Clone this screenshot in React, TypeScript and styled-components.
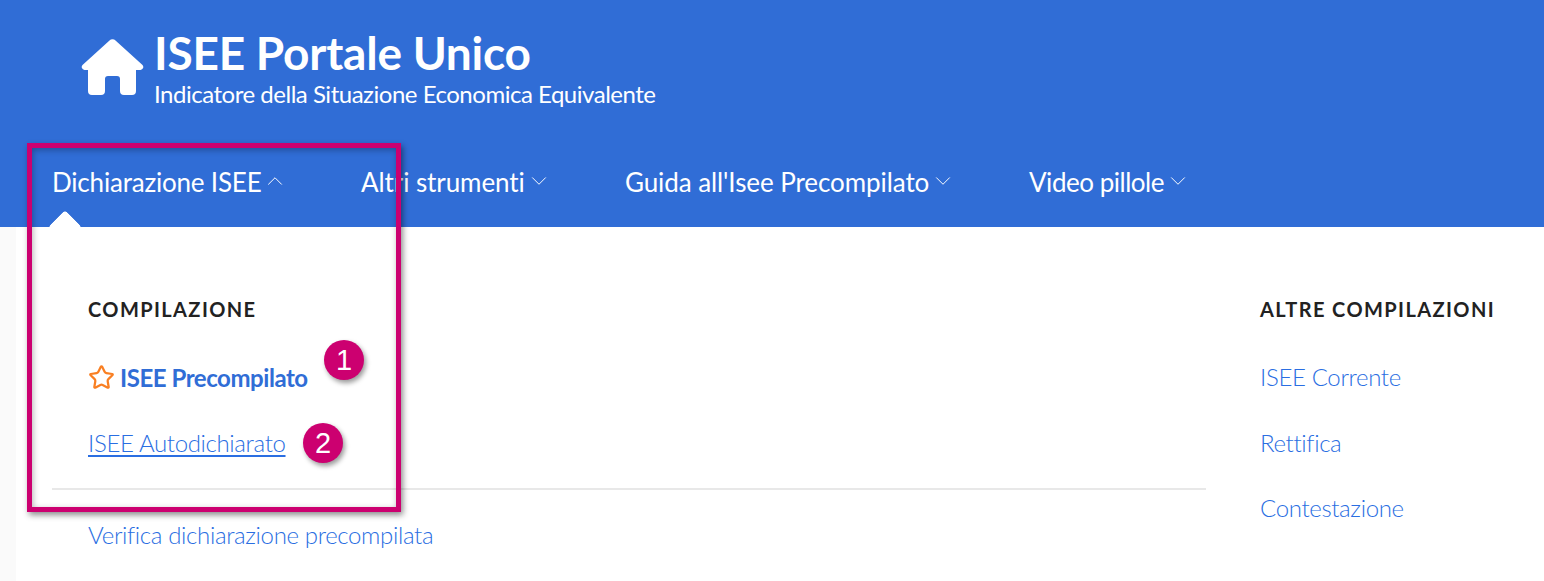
import React from "react";
import styled, { createGlobalStyle } from "styled-components";
import { Star, ChevronDown, ChevronUp } from "lucide-react";

const Global = createGlobalStyle`
  html, body { margin: 0; padding: 0; background: #fafafa; }
  body { font-family: Lato, "Noto Sans", "Liberation Sans", sans-serif; overflow: hidden; height: 581px; }
  * { box-sizing: border-box; }
`;

const Page = styled.div`
  position: relative;
  width: 1544px;
  height: 581px;
  overflow: hidden;
`;

const Header = styled.header`
  height: 227px;
  background: #306dd6;
  color: #fff;
  display: flex;
  flex-direction: column;
`;

const Brand = styled.div`
  display: flex;
  align-items: flex-start;
  gap: 10px;
  padding: 25px 0 0 81px;
  height: 143px;
`;

const HomeIcon = styled.svg`
  width: 63px;
  height: 56px;
  margin-top: 14px;
  flex: none;
`;

const BrandText = styled.div`
  display: flex;
  flex-direction: column;
`;

const Title = styled.h1`
  margin: 0;
  font-size: 46px;
  line-height: 56px;
  font-weight: 700;
  letter-spacing: -0.22px;
`;

const Subtitle = styled.div`
  font-size: 24px;
  line-height: 28px;
  margin-top: -1px;
  letter-spacing: -0.48px;
`;

const Nav = styled.nav`
  display: flex;
  padding: 22px 0 0 52px;
  position: relative;
`;

const NavItem = styled.a<{ $w: number; $track: number }>`
  display: flex;
  align-items: center;
  gap: 1px;
  width: ${(p) => p.$w}px;
  height: 34px;
  font-size: 26px;
  letter-spacing: ${(p) => p.$track}px;
  color: #fff;
`;

const Chevron = styled.span`
  display: flex;
  margin-top: -3px;
`;

const Caret = styled.span`
  position: absolute;
  left: 53px;
  top: 72px;
  width: 24px;
  height: 24px;
  background: #fff;
  border-radius: 4px;
  transform: rotate(45deg);
  clip-path: polygon(0 0, 100% 0, 0 100%);
`;

const Menu = styled.main`
  margin-left: 16px;
  height: 354px;
  background: #fff;
  display: grid;
  grid-template-columns: 1190px 1fr;
  padding: 0 0 0 36px;
`;

const LeftColumn = styled.section`
  display: flex;
  flex-direction: column;
  padding-top: 68px;
`;

const RightColumn = styled.section`
  display: flex;
  flex-direction: column;
  padding: 68px 0 0 18px;
`;

const LinkGroup = styled.div`
  padding-left: 36px;
  display: flex;
  flex-direction: column;
`;

const Heading = styled.h3`
  margin: 0 0 21px;
  font-size: 20px;
  line-height: 28px;
  font-weight: 700;
  letter-spacing: 1.4px;
  color: #222;
  white-space: nowrap;
`;

const MenuLink = styled.a<{ $bold?: boolean; $under?: boolean }>`
  display: flex;
  align-items: center;
  gap: 5px;
  height: 65.5px;
  padding-top: ${(p) => (p.$bold ? "2px" : "0")};
  font-size: 24px;
  letter-spacing: ${(p) => (p.$bold ? "-0.45px" : "-0.35px")};
  color: ${(p) => (p.$bold ? "#306dd6" : "#2a6ee2")};
  font-weight: ${(p) => (p.$bold ? 700 : 300)};
  span { text-decoration: ${(p) => (p.$under ? "underline" : "none")}; text-underline-offset: 3px; }
`;

const OrangeStar = styled(Star)`
  color: #f97f22;
  flex: none;
`;

const Divider = styled.hr`
  margin: 13px 0 12px;
  border: none;
  height: 2px;
  background: #e8e8e8;
  width: 1154px;
`;

const Highlight = styled.div`
  position: absolute;
  left: 27px;
  top: 143px;
  width: 374px;
  height: 369px;
  border: 5px solid #cc0070;
  box-shadow: 2px 3px 6px rgba(0, 0, 0, 0.45), inset 1px 2px 6px rgba(0, 0, 0, 0.3);
  pointer-events: none;
`;

const Badge = styled.div<{ $x: number; $y: number }>`
  position: absolute;
  left: ${(p) => p.$x}px;
  top: ${(p) => p.$y}px;
  width: 40px;
  height: 40px;
  border-radius: 50%;
  background: #cc0070;
  color: #fff;
  font-family: "Liberation Sans", Arial, sans-serif;
  font-size: 29px;
  display: flex;
  align-items: center;
  justify-content: center;
  box-shadow: 2px 3px 5px rgba(0, 0, 0, 0.4);
`;

const nav = [
  { label: "Dichiarazione ISEE", w: 309, track: -0.2, up: true },
  { label: "Altri strumenti", w: 264, track: -0.08 },
  { label: "Guida all'Isee Precompilato", w: 404, track: -0.08 },
  { label: "Video pillole", w: 200, track: -0.48 },
];

export default function App() {
  return (
    <Page>
      <Global />
      <Header>
        <Brand>
          <HomeIcon viewBox="0 0 63 56" fill="#fff">
            <path d="M28.5 1.5a4 4 0 0 1 6 0L61.5 26a3 3 0 0 1-2 5H55v21a4 4 0 0 1-4 4H43a4 4 0 0 1-4-4V40a3 3 0 0 0-3-3H27a3 3 0 0 0-3 3v12a4 4 0 0 1-4 4H11a4 4 0 0 1-4-4V31H3.5a3 3 0 0 1-2-5z" />
          </HomeIcon>
          <BrandText>
            <Title>ISEE Portale Unico</Title>
            <Subtitle>Indicatore della Situazione Economica Equivalente</Subtitle>
          </BrandText>
        </Brand>
        <Nav>
          {nav.map((n) => (
            <NavItem key={n.label} $w={n.w} $track={n.track}>
              {n.label}
              <Chevron>
                {n.up ? <ChevronUp size={26} strokeWidth={0.9} /> : <ChevronDown size={26} strokeWidth={0.9} />}
              </Chevron>
            </NavItem>
          ))}
          <Caret />
        </Nav>
      </Header>
      <Menu>
        <LeftColumn>
          <LinkGroup>
            <Heading>COMPILAZIONE</Heading>
            <MenuLink $bold>
              <OrangeStar size={27} strokeWidth={2} />
              <span>ISEE Precompilato</span>
            </MenuLink>
            <MenuLink $under>
              <span>ISEE Autodichiarato</span>
            </MenuLink>
          </LinkGroup>
          <Divider />
          <LinkGroup>
            <MenuLink>
              <span>Verifica dichiarazione precompilata</span>
            </MenuLink>
          </LinkGroup>
        </LeftColumn>
        <RightColumn>
          <Heading>ALTRE COMPILAZIONI</Heading>
          <MenuLink><span>ISEE Corrente</span></MenuLink>
          <MenuLink><span>Rettifica</span></MenuLink>
          <MenuLink><span>Contestazione</span></MenuLink>
        </RightColumn>
      </Menu>
      <Highlight />
      <Badge $x={324} $y={340}>1</Badge>
      <Badge $x={303} $y={423}>2</Badge>
    </Page>
  );
}
